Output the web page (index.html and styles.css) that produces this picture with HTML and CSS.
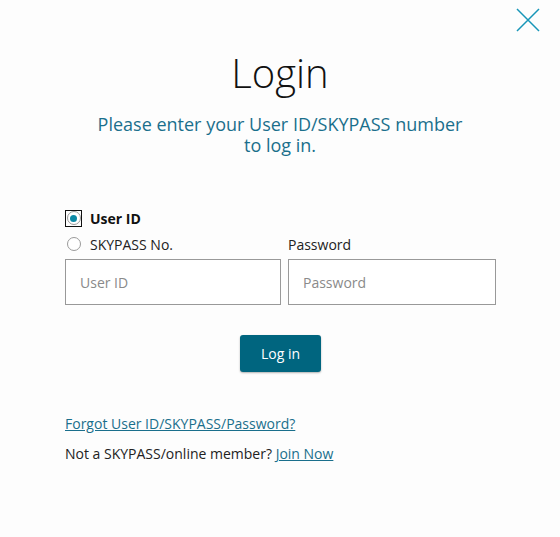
FILE: index.html
```html
<!DOCTYPE html>
<html lang="en">
<head>
<meta charset="utf-8">
<title>Login</title>
<link rel="stylesheet" href="styles.css">
</head>
<body>
<div class="modal">
  <button class="close" aria-label="Close">
    <svg width="24" height="24" viewBox="0 0 24 24"><path d="M1 1 L23 23 M23 1 L1 23" stroke="#1796b8" stroke-width="1.5" fill="none"/></svg>
  </button>
  <h1 class="title">Login</h1>
  <p class="subtitle">Please enter your User ID/SKYPASS number<br>to log in.</p>
  <form class="form">
    <div class="grid">
      <label class="radio checked"><span class="focus"><span class="circle"><span class="dot"></span></span></span><b>User ID</b></label>
      <span></span>
      <label class="radio"><span class="focus plain"><span class="circle"></span></span>SKYPASS No.</label>
      <span class="label">Password</span>
      <div class="input">User ID</div>
      <div class="input">Password</div>
    </div>
    <div class="actions"><button type="button" class="btn">Log in</button></div>
    <a class="link forgot" href="#">Forgot User ID/SKYPASS/Password?</a>
    <p class="join">Not a SKYPASS/online member? <a class="link" href="#">Join Now</a></p>
  </form>
</div>
</body>
</html>
```
FILE: styles.css
```css
html, body { margin: 0; padding: 0; }
body {
  background: #fdfdfd;
  font-family: "Open Sans", "Liberation Sans", sans-serif;
  color: #222;
  width: 560px;
  height: 537px;
  overflow: hidden;
}
.modal { position: relative; padding-top: 47px; }
.close {
  position: absolute; top: 8px; right: 20px;
  background: none; border: 0; padding: 0; width: 24px; height: 24px;
}
.close svg { display: block; }
.title {
  margin: 0;
  text-align: center;
  font-weight: 300;
  font-size: 40px;
  line-height: 52px;
  color: #111;
}
.subtitle {
  margin: 15px 0 0;
  text-align: center;
  font-size: 18px;
  line-height: 21px;
  color: #1a6f8c;
}
.form { margin: 50px 0 0 65px; width: 431px; font-size: 14px; }
.grid {
  display: grid;
  grid-template-columns: 216px 208px;
  column-gap: 7px;
  row-gap: 2px;
}
.radio { display: flex; align-items: center; gap: 8px; height: 24px; }
.focus {
  width: 17px; height: 17px; box-sizing: border-box; border: 1px solid #111;
  display: flex; align-items: center; justify-content: center;
}
.focus.plain { border-color: transparent; }
.circle {
  width: 14px; height: 14px; box-sizing: border-box; border: 1px solid #9a9a9a; border-radius: 50%;
  display: flex; align-items: center; justify-content: center; background: #fff;
}
.dot { width: 7px; height: 7px; border-radius: 50%; background: #0d8aa6; }
.radio b { font-weight: 700; color: #111; }
.label { display: flex; align-items: center; height: 24px; }
.input {
  margin-top: 1px;
  height: 44px;
  border: 1px solid #999;
  background: #fff;
  color: #8a8a8a;
  display: flex; align-items: center;
  padding-left: 14px;
}
.actions { display: flex; justify-content: center; margin-top: 30px; }
.btn {
  width: 81px; height: 37px;
  background: #00657f; color: #fff;
  border: 0; border-radius: 3px;
  font-family: inherit; font-size: 14px;
  box-shadow: 0 1px 2px rgba(0,0,0,0.3);
}
.link { color: #1a6f8c; text-decoration: underline; }
.forgot { display: block; margin-top: 42px; line-height: 20px; }
.join { margin: 10px 0 0; line-height: 20px; }
```
